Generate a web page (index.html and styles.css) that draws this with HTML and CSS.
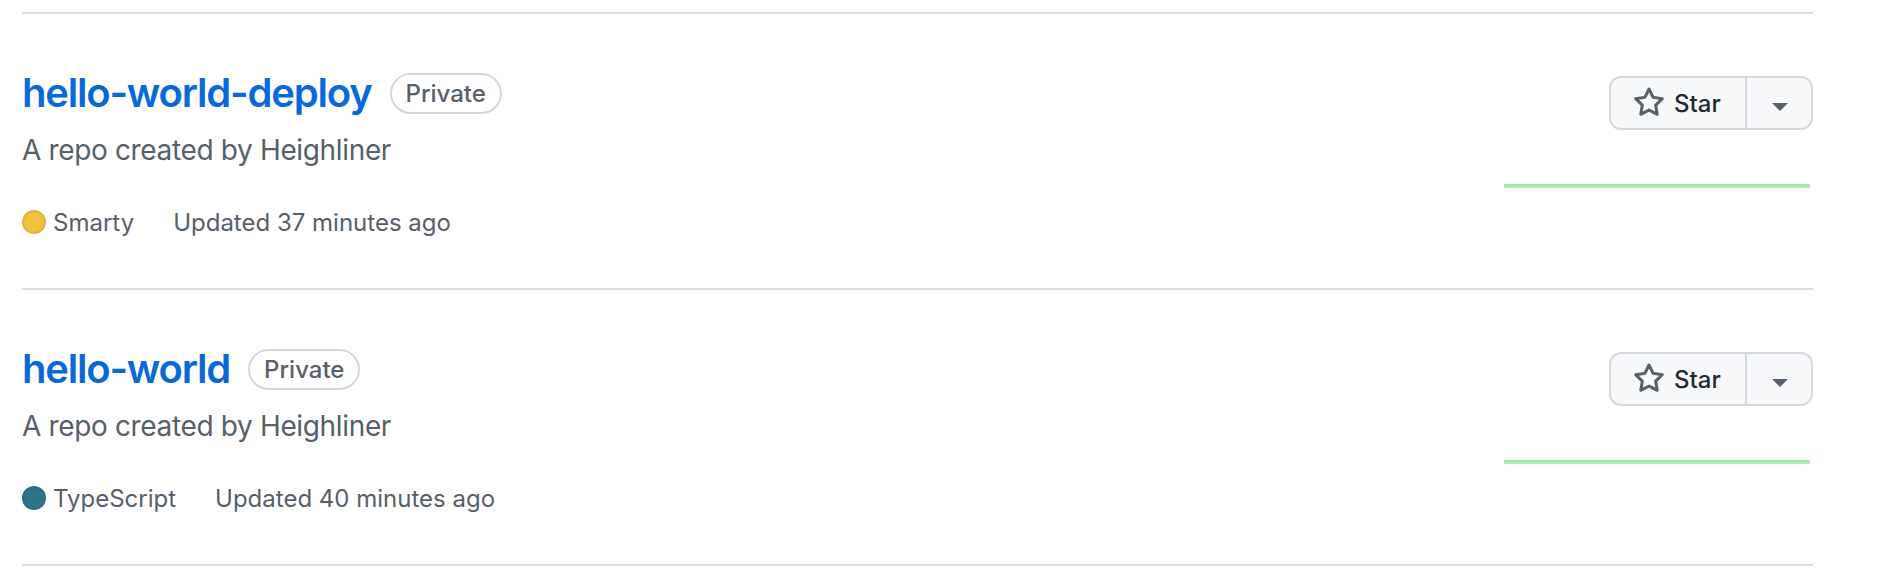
FILE: index.html
```html
<!DOCTYPE html>
<html lang="en">
<head>
<meta charset="utf-8">
<title>Repositories</title>
<link rel="stylesheet" href="styles.css">
</head>
<body>
<div class="page">
  <ul class="repo-list">
    <li class="repo">
      <div class="repo-main">
        <div class="repo-title">
          <a class="repo-name" href="#">hello-world-deploy</a>
          <span class="label">Private</span>
        </div>
        <p class="repo-desc">A repo created by Heighliner</p>
        <div class="repo-meta">
          <span class="lang"><span class="lang-dot smarty"></span>Smarty</span>
          <span class="updated">Updated 37 minutes ago</span>
        </div>
      </div>
      <div class="repo-side">
        <div class="star-group">
          <button class="star-btn" type="button">
            <svg class="star-icon" viewBox="0 0 16 16" width="32" height="32" aria-hidden="true"><path d="M8 .25a.75.75 0 0 1 .673.418l1.882 3.815 4.21.612a.75.75 0 0 1 .416 1.279l-3.046 2.970.719 4.192a.751.751 0 0 1-1.088.791L8 12.347l-3.766 1.980a.75.75 0 0 1-1.088-.79l.72-4.194L.818 6.374a.75.75 0 0 1 .416-1.28l4.21-.611L7.327.668A.75.75 0 0 1 8 .25Zm0 2.445L6.615 5.5a.75.75 0 0 1-.564.41l-3.097.45 2.24 2.184a.75.75 0 0 1 .216.664l-.528 3.084 2.769-1.456a.75.75 0 0 1 .698 0l2.77 1.456-.53-3.084a.75.75 0 0 1 .216-.664l2.24-2.183-3.096-.45a.75.75 0 0 1-.564-.41L8 2.694Z"/></svg>
            <span>Star</span>
          </button>
          <button class="caret-btn" type="button" aria-label="Lists"><span class="caret"></span></button>
        </div>
        <div class="sparkline"></div>
      </div>
    </li>
    <li class="repo">
      <div class="repo-main">
        <div class="repo-title">
          <a class="repo-name" href="#">hello-world</a>
          <span class="label">Private</span>
        </div>
        <p class="repo-desc">A repo created by Heighliner</p>
        <div class="repo-meta">
          <span class="lang"><span class="lang-dot typescript"></span>TypeScript</span>
          <span class="updated">Updated 40 minutes ago</span>
        </div>
      </div>
      <div class="repo-side">
        <div class="star-group">
          <button class="star-btn" type="button">
            <svg class="star-icon" viewBox="0 0 16 16" width="32" height="32" aria-hidden="true"><path d="M8 .25a.75.75 0 0 1 .673.418l1.882 3.815 4.21.612a.75.75 0 0 1 .416 1.279l-3.046 2.970.719 4.192a.751.751 0 0 1-1.088.791L8 12.347l-3.766 1.980a.75.75 0 0 1-1.088-.79l.72-4.194L.818 6.374a.75.75 0 0 1 .416-1.28l4.21-.611L7.327.668A.75.75 0 0 1 8 .25Zm0 2.445L6.615 5.5a.75.75 0 0 1-.564.41l-3.097.45 2.24 2.184a.75.75 0 0 1 .216.664l-.528 3.084 2.769-1.456a.75.75 0 0 1 .698 0l2.77 1.456-.53-3.084a.75.75 0 0 1 .216-.664l2.24-2.183-3.096-.45a.75.75 0 0 1-.564-.41L8 2.694Z"/></svg>
            <span>Star</span>
          </button>
          <button class="caret-btn" type="button" aria-label="Lists"><span class="caret"></span></button>
        </div>
        <div class="sparkline"></div>
      </div>
    </li>
  </ul>
</div>
</body>
</html>
```

FILE: styles.css
```css
* {
  box-sizing: border-box;
}

html, body {
  margin: 0;
  padding: 0;
  background: #ffffff;
}

body {
  font-family: Inter, "Liberation Sans", Arial, sans-serif;
  color: #24292f;
}

.page {
  padding: 12px 0 0 22px;
}

.repo-list {
  list-style: none;
  margin: 0;
  padding: 0;
  width: 1791px;
  border-top: 2px solid #d8dee4;
}

.repo {
  display: flex;
  justify-content: space-between;
  padding: 48px 0 47px;
  border-bottom: 2px solid #d8dee4;
}

.repo-main {
  display: flex;
  flex-direction: column;
}

.repo-title {
  display: flex;
  align-items: center;
  margin-top: 6px;
  height: 50px;
}

.repo-name {
  font-size: 40px;
  line-height: 50px;
  font-weight: 600;
  color: #0969da;
  text-decoration: none;
  letter-spacing: -1.2px;
}

.label {
  margin-left: 18px;
  height: 41px;
  padding: 0 14px;
  display: inline-flex;
  align-items: center;
  border: 2px solid #d0d7de;
  border-radius: 999px;
  font-size: 24px;
  font-weight: 500;
  color: #57606a;
}

.repo-desc {
  margin: 12px 0 0;
  font-size: 28px;
  line-height: 40px;
  letter-spacing: -0.35px;
  color: #57606a;
}

.repo-meta {
  margin-top: 35px;
  display: flex;
  align-items: center;
  height: 36px;
  font-size: 24px;
  line-height: 36px;
  color: #57606a;
}

.lang {
  display: inline-flex;
  align-items: center;
  margin-right: 39px;
}

.lang-dot {
  width: 24px;
  height: 24px;
  border-radius: 50%;
  border: 2px solid rgba(27, 31, 36, 0.08);
  margin-right: 7px;
  position: relative;
  top: -1px;
}

.lang-dot.smarty {
  background: #f0c040;
}

.lang-dot.typescript {
  background: #2b7489;
}

.repo-side {
  width: 309px;
  margin-top: 14px;
  display: flex;
  flex-direction: column;
  align-items: flex-end;
}

.star-group {
  display: flex;
  height: 54px;
  border: 2px solid #d5d8dc;
  border-radius: 12px;
  background: #f6f8fa;
  overflow: hidden;
}

.star-btn,
.caret-btn {
  display: flex;
  align-items: center;
  background: transparent;
  border: 0;
  margin: 0;
  font-family: inherit;
  color: #24292f;
  cursor: pointer;
}

.star-btn {
  width: 136px;
  padding: 0 0 0 22px;
  font-size: 24px;
  font-weight: 500;
  border-right: 2px solid #d5d8dc;
}

.star-icon {
  fill: #57606a;
  margin-right: 9px;
  flex: none;
}

.caret-btn {
  width: 64px;
  justify-content: center;
  padding: 0;
}

.caret {
  display: block;
  width: 0;
  height: 0;
  margin-top: 8px;
  margin-left: 2px;
  border-top: 8px solid #57606a;
  border-left: 8px solid transparent;
  border-right: 8px solid transparent;
}

.sparkline {
  align-self: flex-start;
  margin-top: 54px;
  width: 306px;
  height: 4px;
  background: linear-gradient(#9ee4a9, #b0ecb9);
}
```
